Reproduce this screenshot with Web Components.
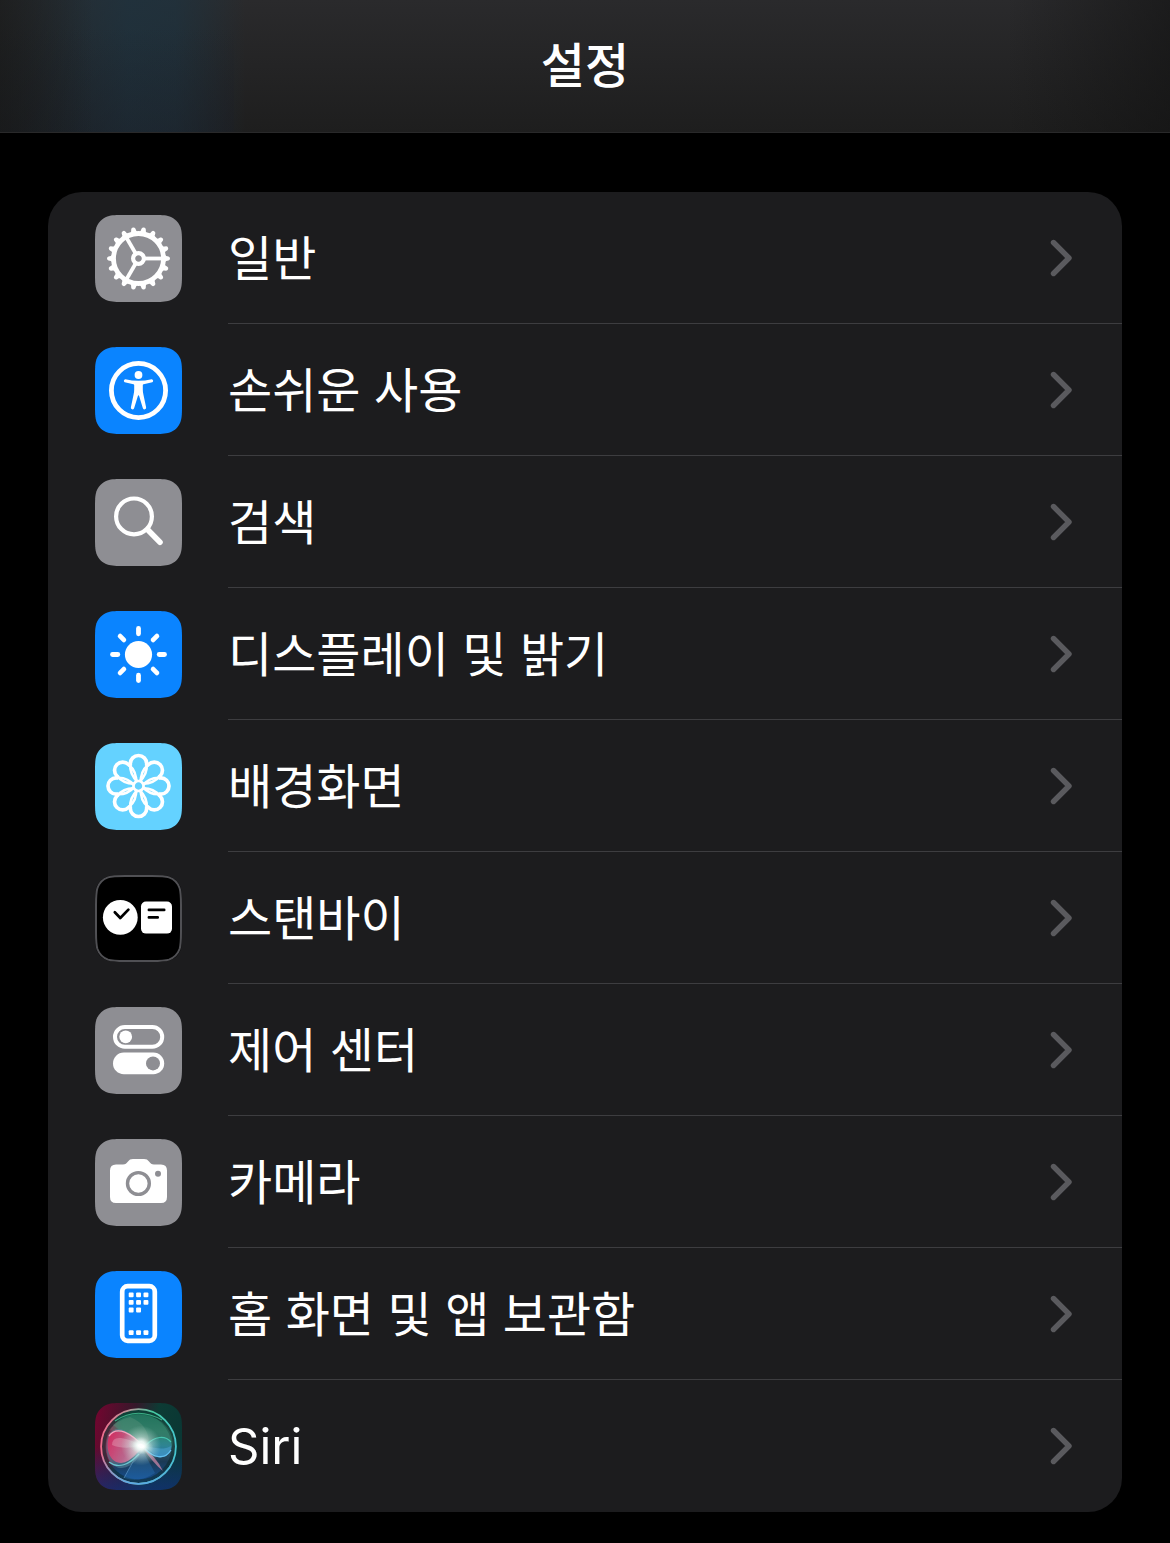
<!DOCTYPE html>
<html lang="ko">
<head>
<meta charset="utf-8">
<meta name="viewport" content="width=device-width, initial-scale=1">
<title>설정</title>
<style>
  body {
    margin: 0;
    background: #000;
    color: #fff;
    font-family: Inter, "Noto Sans CJK KR", sans-serif;
  }
</style>
</head>
<body>
<settings-page>
  <nav-header slot="header">설정</nav-header>
  <settings-group>
    <settings-row icon="general">일반</settings-row>
    <settings-row icon="accessibility">손쉬운 사용</settings-row>
    <settings-row icon="search">검색</settings-row>
    <settings-row icon="display">디스플레이 및 밝기</settings-row>
    <settings-row icon="wallpaper">배경화면</settings-row>
    <settings-row icon="standby">스탠바이</settings-row>
    <settings-row icon="control">제어 센터</settings-row>
    <settings-row icon="camera">카메라</settings-row>
    <settings-row icon="home">홈 화면 및 앱 보관함</settings-row>
    <settings-row icon="siri" class="latin" last>Siri</settings-row>
  </settings-group>
</settings-page>
<script>
const GRAY = '#8e8e93', BLUE = '#0a84ff', CYAN = '#64d2ff';

// Rounded square with continuous corners, as used for app icons.
function squircle(s, r, o = 0) {
  const a = 1.52866 * r, b = 1.08849 * r, c = 0.86841 * r, d = 0.63149 * r,
        e = 0.07491 * r, f = 0.37282 * r, g = 0.16906 * r;
  const p = (x, y) => `${(x + o).toFixed(2)} ${(y + o).toFixed(2)}`;
  const corner = m => `L${m(s - a, 0)}C${m(s - b, 0)} ${m(s - c, 0)} ${m(s - d, e)}` +
    `C${m(s - f, g)} ${m(s - g, f)} ${m(s - e, d)}C${m(s, c)} ${m(s, b)} ${m(s, a)}`;
  return (corner(p) + corner((x, y) => p(s - y, x)) + corner((x, y) => p(s - x, s - y)) +
    corner((x, y) => p(y, s - x))).replace('L', 'M') + 'Z';
}
const around = (n, draw) => Array.from({ length: n }, (_, i) => draw(i * 360 / n)).join('');

const ICONS = {
  general: [GRAY, `<g transform="translate(43.5 43.5)">
    <circle r="25" fill="none" stroke="#fff" stroke-width="4.8"/>
    ${around(18, a => `<path transform="rotate(${a})" fill="#fff" d="M26 -3.8Q27.5 -2.3 30 -2.1Q31.5 -1.6 31.5 0T30 2.1Q27.5 2.3 26 3.8Z"/>`)}
    ${around(3, a => `<path transform="rotate(${a})" stroke="#fff" stroke-width="3.8" d="M6 0H24"/>`)}
    <circle r="5.4" fill="none" stroke="#fff" stroke-width="4.2"/></g>`],
  accessibility: [BLUE, `<circle cx="43.5" cy="43.5" r="27.1" fill="none" stroke="#fff" stroke-width="4.8"/>
    <circle cx="43.5" cy="28" r="3.9" fill="#fff"/>
    <path fill="#fff" d="M30.3 32.3Q37 33.8 43.5 33.8T56.7 32.3A1.6 1.6 0 0 1 57.3 35.3L48.6 37.2Q47.8 37.4 47.8 38.3V42.5Q47.8 45 48.4 47.4L51.1 60.2A1.7 1.7 0 0 1 47.8 61.1L44.2 49.2Q43.5 47.4 42.8 49.2L39.2 61.1A1.7 1.7 0 0 1 35.9 60.2L38.6 47.4Q39.2 45 39.2 42.5V38.3Q39.2 37.4 38.4 37.2L29.7 35.3A1.6 1.6 0 0 1 30.3 32.3Z"/>`],
  search: [GRAY, `<circle cx="39" cy="37.4" r="17.9" fill="none" stroke="#fff" stroke-width="4.2"/>
    <path stroke="#fff" stroke-width="5.6" stroke-linecap="round" d="M53 51L65 63.2"/>`],
  display: [BLUE, `<g transform="translate(43.5 43.5)"><circle r="13.6" fill="#fff"/>
    ${around(8, a => `<path transform="rotate(${a})" stroke="#fff" stroke-width="4.8" stroke-linecap="round" d="M20.7 0H26"/>`)}</g>`],
  wallpaper: [CYAN, `<g transform="translate(43.5 43)" fill="none" stroke="#fff">
    ${around(8, a => `<g transform="rotate(${a})"><path stroke-width="2.8" d="M-8.1 -22.3C-8.9 -14 -6.5 -9 0 -3.5C6.5 -9 8.9 -14 8.1 -22.3"/><path stroke-width="3.7" d="M-8.2 -20.5V-22.3A8.2 8.2 0 0 1 8.2 -22.3V-20.5"/></g>`)}
    <circle r="5" fill="${CYAN}" stroke-width="2.6"/></g>`],
  standby: ['#000', `<path d="${squircle(85, 19, 1)}" fill="none" stroke="#505054" stroke-width="2"/>
    <circle cx="25.3" cy="42.4" r="17.4" fill="#fff"/><rect x="46" y="26.6" width="31" height="32" rx="5" fill="#fff"/>
    <path fill="none" stroke="#000" stroke-width="2.7" stroke-linecap="round" stroke-linejoin="round" d="M19.8 37.2L25.3 43L33.4 34.6M53.9 34.9H69.2M53.9 42.4H62.7"/>`],
  control: [GRAY, `<rect x="20" y="20" width="47.2" height="19.8" rx="9.9" fill="none" stroke="#fff" stroke-width="4"/>
    <circle cx="30.7" cy="29.8" r="6.4" fill="#fff"/><rect x="18" y="45.6" width="51.2" height="21.6" rx="10.8" fill="#fff"/>
    <circle cx="58" cy="56.4" r="7" fill="${GRAY}"/>`],
  camera: [GRAY, `<path fill="#fff" d="M21 25.6H28C30.5 25.6 31.4 24.6 33 22.6C34.4 20.8 35.4 20 38 20H49C51.6 20 52.6 20.8 54 22.6C55.6 24.6 56.5 25.6 59 25.6H66Q72 25.6 72 31.6V58Q72 64 66 64H21Q15 64 15 58V31.6Q15 25.6 21 25.6Z"/>
    <circle cx="43.4" cy="44.5" r="10.9" fill="none" stroke="${GRAY}" stroke-width="3.4"/><circle cx="63" cy="34.7" r="3" fill="${GRAY}"/>`],
  home: [BLUE, `<rect x="27.2" y="15.2" width="32.6" height="54.6" rx="5.5" fill="none" stroke="#fff" stroke-width="4.7"/>
    ${[[0, 0], [1, 0], [2, 0], [0, 1], [1, 1], [2, 1], [0, 2], [1, 2], [0, 5], [1, 5], [2, 5]]
      .map(([c, r]) => `<rect x="${33.7 + c * 7.4}" y="${21.4 + r * 7.55}" width="4.9" height="4.9" rx="1" fill="#fff"/>`).join('')}`],
  siri: ['url(#base)', `<defs>
      <linearGradient id="base" x1="0" y1=".2" x2="1" y2=".4"><stop stop-color="#70062f"/><stop offset=".42" stop-color="#35182a"/><stop offset=".68" stop-color="#0d3b34"/><stop offset="1" stop-color="#0a3734"/></linearGradient>
      <linearGradient id="low" x1="0" y1="0" x2="0" y2="1"><stop offset=".5" stop-color="#12327a" stop-opacity="0"/><stop offset="1" stop-color="#12307a" stop-opacity=".75"/></linearGradient>
      <linearGradient id="rim" x1="0" y1=".4" x2="1" y2=".5"><stop stop-color="#ee6c8d"/><stop offset=".35" stop-color="#b49a9a"/><stop offset=".65" stop-color="#45c9a0"/><stop offset="1" stop-color="#46c6cf"/></linearGradient>
      <linearGradient id="rimlow" x1="0" y1="0" x2="0" y2="1"><stop offset=".6" stop-color="#5aa9e6" stop-opacity="0"/><stop offset="1" stop-color="#5aa9e6"/></linearGradient>
      <linearGradient id="orb" x1=".5" y1="0" x2=".5" y2="1"><stop stop-color="#0c5a46"/><stop offset=".3" stop-color="#2c6d5d"/><stop offset=".52" stop-color="#35606a"/><stop offset=".7" stop-color="#1b3a55"/><stop offset="1" stop-color="#145098"/></linearGradient>
      <radialGradient id="shine"><stop stop-color="#fff"/><stop offset=".2" stop-color="#fff" stop-opacity=".95"/><stop offset=".45" stop-color="#e2f5ee" stop-opacity=".5"/><stop offset="1" stop-color="#b5e0d4" stop-opacity="0"/></radialGradient>
      <linearGradient id="pink" x1="0" y1=".2" x2="1" y2=".7"><stop stop-color="#e2265e"/><stop offset=".6" stop-color="#d0648e"/><stop offset="1" stop-color="#e3b0c4"/></linearGradient>
      <linearGradient id="aqua" x1="0" y1="0" x2="0" y2="1"><stop stop-color="#2a8a80"/><stop offset="1" stop-color="#2b86c4"/></linearGradient>
      <filter id="soft" x="-30%" y="-30%" width="160%" height="160%"><feGaussianBlur stdDeviation="3"/></filter>
      <filter id="silk" x="-10%" y="-10%" width="120%" height="120%"><feGaussianBlur stdDeviation=".5"/></filter>
      <clipPath id="ball"><circle cx="43.5" cy="43.5" r="37"/></clipPath></defs>
    <path d="${squircle(87, 19.5)}" fill="url(#low)"/>
    <circle cx="43.5" cy="43.5" r="37.5" fill="url(#orb)"/>
    <g clip-path="url(#ball)">
      <ellipse cx="10" cy="36" rx="12" ry="32" fill="#8d2148" opacity=".8" filter="url(#soft)"/>
      <circle cx="43.5" cy="43.5" r="35" fill="none" stroke="#0d2a2c" stroke-width="4" opacity=".55" filter="url(#silk)"/>
      <g filter="url(#silk)">
        <path d="M18 22Q40 2 67 19Q80 31 77 44L45 43Z" fill="#3d9a7c" opacity=".35"/>
        <path d="M20 18Q42 3 67 17" fill="none" stroke="#46c796" stroke-width="1.2" opacity=".8"/>
        <path d="M35 14Q55 22 54 43L40 42Q28 29 14 27Q22 17 35 14Z" fill="#8aa896" opacity=".22"/>
        <path d="M46 44L29 75Q45 80 60 70Z" fill="#2f78bf" opacity=".35"/>
        <path d="M29 75L46 44" stroke="#68a8d8" stroke-width=".8" opacity=".7"/>
        <path d="M48 45Q60 52 68 68Q58 60 48 45Z" fill="#c986a6" opacity=".75"/>
        <path d="M46 43C36 28 22 20 14 31C8 44 12 65 27 65C38 64 44 54 50 44Z" fill="#5b90a5" opacity=".5"/>
        <path d="M49 44C36 30 22 24 14 33C10 44 14 60 26 60C37 59 42 48 49 44Z" fill="url(#pink)" opacity=".85"/>
        <path d="M14 33C22 22 36 30 49 44" fill="none" stroke="#ff9dba" stroke-width="1.3"/>
        <path d="M14 59C23 66 34 62 44 51" fill="none" stroke="#6cc5d0" stroke-width="1.2"/>
        <path d="M17 42Q17 34 26 35Q36 36 46 43Q28 47 17 42Z" fill="#fff" opacity=".22"/>
        <path d="M47 43C57 34 68 32 76 38C79 48 72 56 63 54C56 52 51 47 47 43Z" fill="url(#aqua)" opacity=".8"/>
        <path d="M51 44C61 44 67 48 76 43C76 51 71 55 64 54Q57 51 51 44Z" fill="#51a8d8" opacity=".45"/>
        <path d="M51 42C60 33 70 32 76 39" fill="none" stroke="#47c4af" stroke-width="1.2"/>
        <path d="M50 46C58 54 69 58 76 47" fill="none" stroke="#63c0f0" stroke-width="1.3"/>
      </g>
    </g>
    <circle cx="46" cy="42.5" r="20" fill="url(#shine)"/>
    <ellipse cx="46" cy="43" rx="13" ry="8" fill="url(#shine)" transform="rotate(14 46 43)"/>
    <circle cx="43.5" cy="43.5" r="37.4" fill="none" stroke="url(#rim)" stroke-width="1.8"/>
    <circle cx="43.5" cy="43.5" r="37.4" fill="none" stroke="url(#rimlow)" stroke-width="1.8"/>`]
};

function define(name, markup, setup) {
  const template = document.createElement('template');
  template.innerHTML = markup;
  customElements.define(name, class extends HTMLElement {
    connectedCallback() {
      if (this.shadowRoot) return;
      this.attachShadow({ mode: 'open' }).append(template.content.cloneNode(true));
      if (setup) setup(this, this.shadowRoot);
    }
  });
}

define('settings-page', `<style>
  :host { display: block; min-height: 100vh; }
  main { padding: 59px 48px 31px; }
</style><slot name="header"></slot><main><slot></slot></main>`);

define('nav-header', `<style>
  :host { display: block; }
  header {
    display: flex; align-items: center; justify-content: center;
    height: 132px; border-bottom: 1px solid #29292a;
    background:
      linear-gradient(90deg, rgb(22 24 24 / .6), transparent 8%, transparent 86%, rgb(18 18 18 / .6)),
      linear-gradient(transparent 20%, rgb(28 30 38 / .4)) 0 0 / 20% 100% no-repeat,
      linear-gradient(90deg, transparent, rgb(29 52 66 / .4) 6%, rgb(29 52 66 / .7) 11%, rgb(29 52 66 / .65) 15%, transparent 21%),
      linear-gradient(#2a2a2c, #1e1e1e);
  }
  h1 { margin: 0; font-size: 48px; line-height: 64px; font-weight: 500; }
</style><header><h1><slot></slot></h1></header>`);

define('settings-group', `<style>
  :host { display: block; }
  nav { background: #1c1c1e; border-radius: 34px; overflow: hidden; }
</style><nav aria-label="설정"><slot></slot></nav>`);

define('app-icon', `<style>
  :host { display: block; flex: none; width: 87px; height: 87px; }
  svg { display: block; width: 100%; height: 100%; }
</style><svg viewBox="0 0 87 87" aria-hidden="true"></svg>`, (host, root) => {
  const [fill, art] = ICONS[host.getAttribute('name')];
  root.querySelector('svg').innerHTML = `<path d="${squircle(87, 19.5)}" fill="${fill}"/>${art}`;
});

define('chevron-right', `<style>
  :host { display: block; flex: none; width: 24px; height: 38px; }
  svg { display: block; }
</style><svg width="24" height="38" viewBox="0 0 24 38" aria-hidden="true"><path d="M4.5 3.5L20 19L4.5 34.5" fill="none" stroke="#5a5a5e" stroke-width="5.4" stroke-linecap="round" stroke-linejoin="round"/></svg>`);

define('settings-row', `<style>
  :host { display: block; font-size: 48px; }
  :host(.latin) { font-size: 49px; }
  a { display: flex; gap: 46px; height: 132px; padding-left: 47px; color: inherit; text-decoration: none; }
  app-icon { margin-top: 23px; }
  .body {
    display: flex; flex: 1; align-items: center; justify-content: space-between;
    padding-right: 49px; border-bottom: 1px solid #3d3d40; line-height: 64px;
  }
  .label { padding-top: 2px; }
  :host([last]) .body { border-color: transparent; }
</style><a href="#"><span class="body"><span class="label"><slot></slot></span><chevron-right></chevron-right></span></a>`,
(host, root) => {
  const link = root.querySelector('a');
  const icon = document.createElement('app-icon');
  icon.setAttribute('name', host.getAttribute('icon'));
  link.setAttribute('href', '#' + host.getAttribute('icon'));
  link.prepend(icon);
});
</script>
</body>
</html>
